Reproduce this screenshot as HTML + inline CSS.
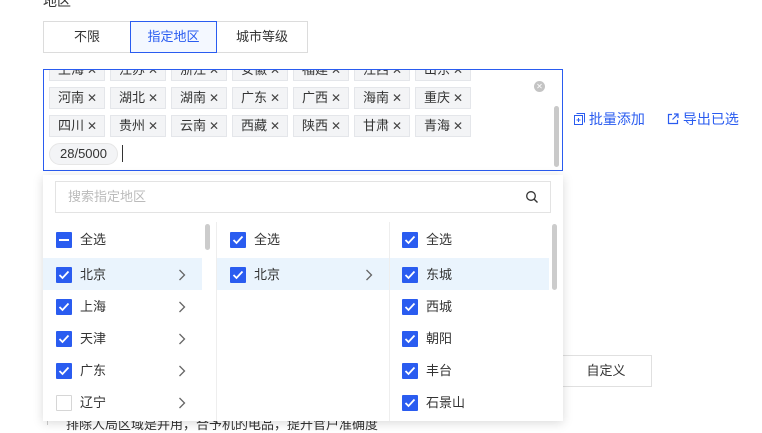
<!DOCTYPE html>
<html><head><meta charset="utf-8"><style>
*{box-sizing:border-box;margin:0;padding:0}
body{width:762px;height:425px;overflow:hidden;background:#fff;font-family:"Liberation Sans","Noto Sans CJK SC",sans-serif;font-size:13px;color:#333;position:relative}
.abs{position:absolute}
.tabs{left:43px;top:21px;height:32px;display:flex}
.tabs div{height:32px;line-height:30px;text-align:center;border:1px solid #dcdcdc;font-size:13px}
.tag{position:absolute;height:22px;line-height:20px;background:#f3f4f6;border:1px solid #e4e6ea;font-size:13px;padding-left:8px;color:#333;width:56px}
.tag span{font-size:12px;margin-left:3px;color:#444}
.cb{position:absolute;width:16px;height:16px;background:#2a5cf0;border-radius:1px}
.cb svg{position:absolute;left:2px;top:3px}
.arr{position:absolute;color:#777}
</style></head><body>
<div class="abs" style="left:43px;top:-9px;font-size:14px;color:#333">地区</div>
<div class="abs tabs">
<div style="width:87px;border-right:none">不限</div>
<div style="width:87px;border-color:#2a5cf0;color:#2a5cf0;background:#f4f8ff">指定地区</div>
<div style="width:91px;border-left:none">城市等级</div>
</div>
<div class="abs" style="left:43px;top:69px;width:520px;height:102px;border:1px solid #2a5cf0;overflow:hidden">
<div style="position:absolute;left:-43px;top:-69px;width:600px;height:200px">
<div class="tag" style="left:48px;top:58px">上海<span>✕</span></div>
<div class="tag" style="left:109px;top:58px">江苏<span>✕</span></div>
<div class="tag" style="left:170px;top:58px">浙江<span>✕</span></div>
<div class="tag" style="left:231px;top:58px">安徽<span>✕</span></div>
<div class="tag" style="left:292px;top:58px">福建<span>✕</span></div>
<div class="tag" style="left:353px;top:58px">江西<span>✕</span></div>
<div class="tag" style="left:414px;top:58px">山东<span>✕</span></div>
<div class="tag" style="left:48px;top:86px">河南<span>✕</span></div>
<div class="tag" style="left:109px;top:86px">湖北<span>✕</span></div>
<div class="tag" style="left:170px;top:86px">湖南<span>✕</span></div>
<div class="tag" style="left:231px;top:86px">广东<span>✕</span></div>
<div class="tag" style="left:292px;top:86px">广西<span>✕</span></div>
<div class="tag" style="left:353px;top:86px">海南<span>✕</span></div>
<div class="tag" style="left:414px;top:86px">重庆<span>✕</span></div>
<div class="tag" style="left:48px;top:114px">四川<span>✕</span></div>
<div class="tag" style="left:109px;top:114px">贵州<span>✕</span></div>
<div class="tag" style="left:170px;top:114px">云南<span>✕</span></div>
<div class="tag" style="left:231px;top:114px">西藏<span>✕</span></div>
<div class="tag" style="left:292px;top:114px">陕西<span>✕</span></div>
<div class="tag" style="left:353px;top:114px">甘肃<span>✕</span></div>
<div class="tag" style="left:414px;top:114px">青海<span>✕</span></div>
<div style="position:absolute;left:48px;top:142px;width:69px;height:22px;line-height:20px;border:1px solid #e6e6e6;background:#f3f4f6;border-radius:11px;text-align:center;font-size:13px">28/5000</div>
<div style="position:absolute;left:121px;top:144px;width:1px;height:17px;background:#333"></div>
<div style="position:absolute;left:533px;top:80px;width:11px;height:11px;border-radius:50%;background:#c4c4c4;color:#fff;font-size:8px;line-height:11px;text-align:center">✕</div>
<div style="position:absolute;left:553px;top:105px;width:5px;height:61px;border-radius:3px;background:#c9c9c9"></div>
</div></div>
<div class="abs" style="left:574px;top:110px;color:#2a5cf0;font-size:14px;line-height:18px">
<svg width="11" height="12" viewBox="0 0 11 12" style="vertical-align:-1px"><rect x="0.5" y="2.5" width="8" height="9" fill="none" stroke="#2a5cf0"/><path d="M2.5 0.5h8v9" fill="none" stroke="#2a5cf0"/><path d="M2.5 7h4M4.5 5v4" stroke="#2a5cf0"/></svg> 批量添加</div>
<div class="abs" style="left:667px;top:110px;color:#2a5cf0;font-size:14px;line-height:18px">
<svg width="12" height="12" viewBox="0 0 12 12" style="vertical-align:-1px"><path d="M5 1.5H1.5v9h9V7" fill="none" stroke="#2a5cf0" stroke-width="1.2"/><path d="M7 1h4v4M11 1L5.5 6.5" fill="none" stroke="#2a5cf0" stroke-width="1.2"/></svg> 导出已选</div>
<div class="abs" style="left:560px;top:355px;width:92px;height:32px;border:1px solid #e0e0e0;line-height:30px;text-align:center">自定义</div>
<div class="abs" style="left:66px;top:414px;font-size:13px;color:#333">排除人局区域是并用，合予机的电品，提升官户准确度</div>
<div class="abs" style="left:47px;top:412px;width:1px;height:13px;background:#ccc"></div>
<div class="abs" style="left:43px;top:175px;width:520px;height:246px;background:#fff;box-shadow:0 2px 10px rgba(0,0,0,.15)">
<div style="position:absolute;left:12px;top:6px;width:496px;height:32px;border:1px solid #e3e3e3;line-height:30px;padding-left:12px;color:#bbb;font-size:13px">搜索指定地区
<svg width="14" height="14" viewBox="0 0 14 14" style="position:absolute;right:11px;top:8px"><circle cx="6" cy="6" r="4.3" fill="none" stroke="#333" stroke-width="1.3"/><path d="M9.2 9.2L12.5 12.5" stroke="#333" stroke-width="1.4"/></svg></div>
<div style="position:absolute;left:173px;top:47px;width:1px;height:199px;background:#eee"></div>
<div style="position:absolute;left:346px;top:47px;width:1px;height:199px;background:#eee"></div>
<div style="position:absolute;left:162px;top:49px;width:5px;height:26px;border-radius:3px;background:#ccc"></div>
<div style="position:absolute;left:509px;top:49px;width:5px;height:66px;border-radius:3px;background:#ccc"></div>
<div style="position:absolute;left:0;top:83px;width:159px;height:32px;background:#eaf4fd"></div>
<div style="position:absolute;left:174px;top:83px;width:172px;height:32px;background:#eaf4fd"></div>
<div style="position:absolute;left:347px;top:83px;width:159px;height:32px;background:#eaf4fd"></div>
</div>
<div id="lists"></div>
<script>
var ck='<svg width="12" height="10" viewBox="0 0 12 10"><path d="M1.5 5l3 3 6-6.5" fill="none" stroke="#fff" stroke-width="1.8"/></svg>';
var h='';
function item(x,y,t,type,arrow){
 var c;
 if(type==1)c='<div class="cb" style="left:'+x+'px;top:'+(y-8)+'px">'+ck+'</div>';
 else if(type==2)c='<div class="cb" style="left:'+x+'px;top:'+(y-8)+'px"><div style="position:absolute;left:3px;top:7px;width:10px;height:2px;background:#fff"></div></div>';
 else c='<div class="cb" style="left:'+x+'px;top:'+(y-8)+'px;background:#fff;border:1px solid #d6d6d6"></div>';
 h+=c+'<div class="abs" style="left:'+(x+24)+'px;top:'+(y-10)+'px;line-height:20px;font-size:13px">'+t+'</div>';
 if(arrow)h+='<svg class="abs" style="left:'+arrow+'px;top:'+(y-6)+'px" width="8" height="12" viewBox="0 0 8 12"><path d="M1.5 1l5 5-5 5" fill="none" stroke="#666" stroke-width="1.3"/></svg>';
}
item(56,240,'全选',2,0);
var c1=['北京','上海','天津','广东','辽宁'];
c1.forEach(function(t,i){item(56,275+i*32,t,i<4?1:0,178);});
item(230,240,'全选',1,0);item(230,275,'北京',1,365);
var c3=['全选','东城','西城','朝阳','丰台','石景山'];
c3.forEach(function(t,i){item(402,i==0?240:275+(i-1)*32,t,1,0);});
document.getElementById('lists').innerHTML=h;
</script>
</body></html>
